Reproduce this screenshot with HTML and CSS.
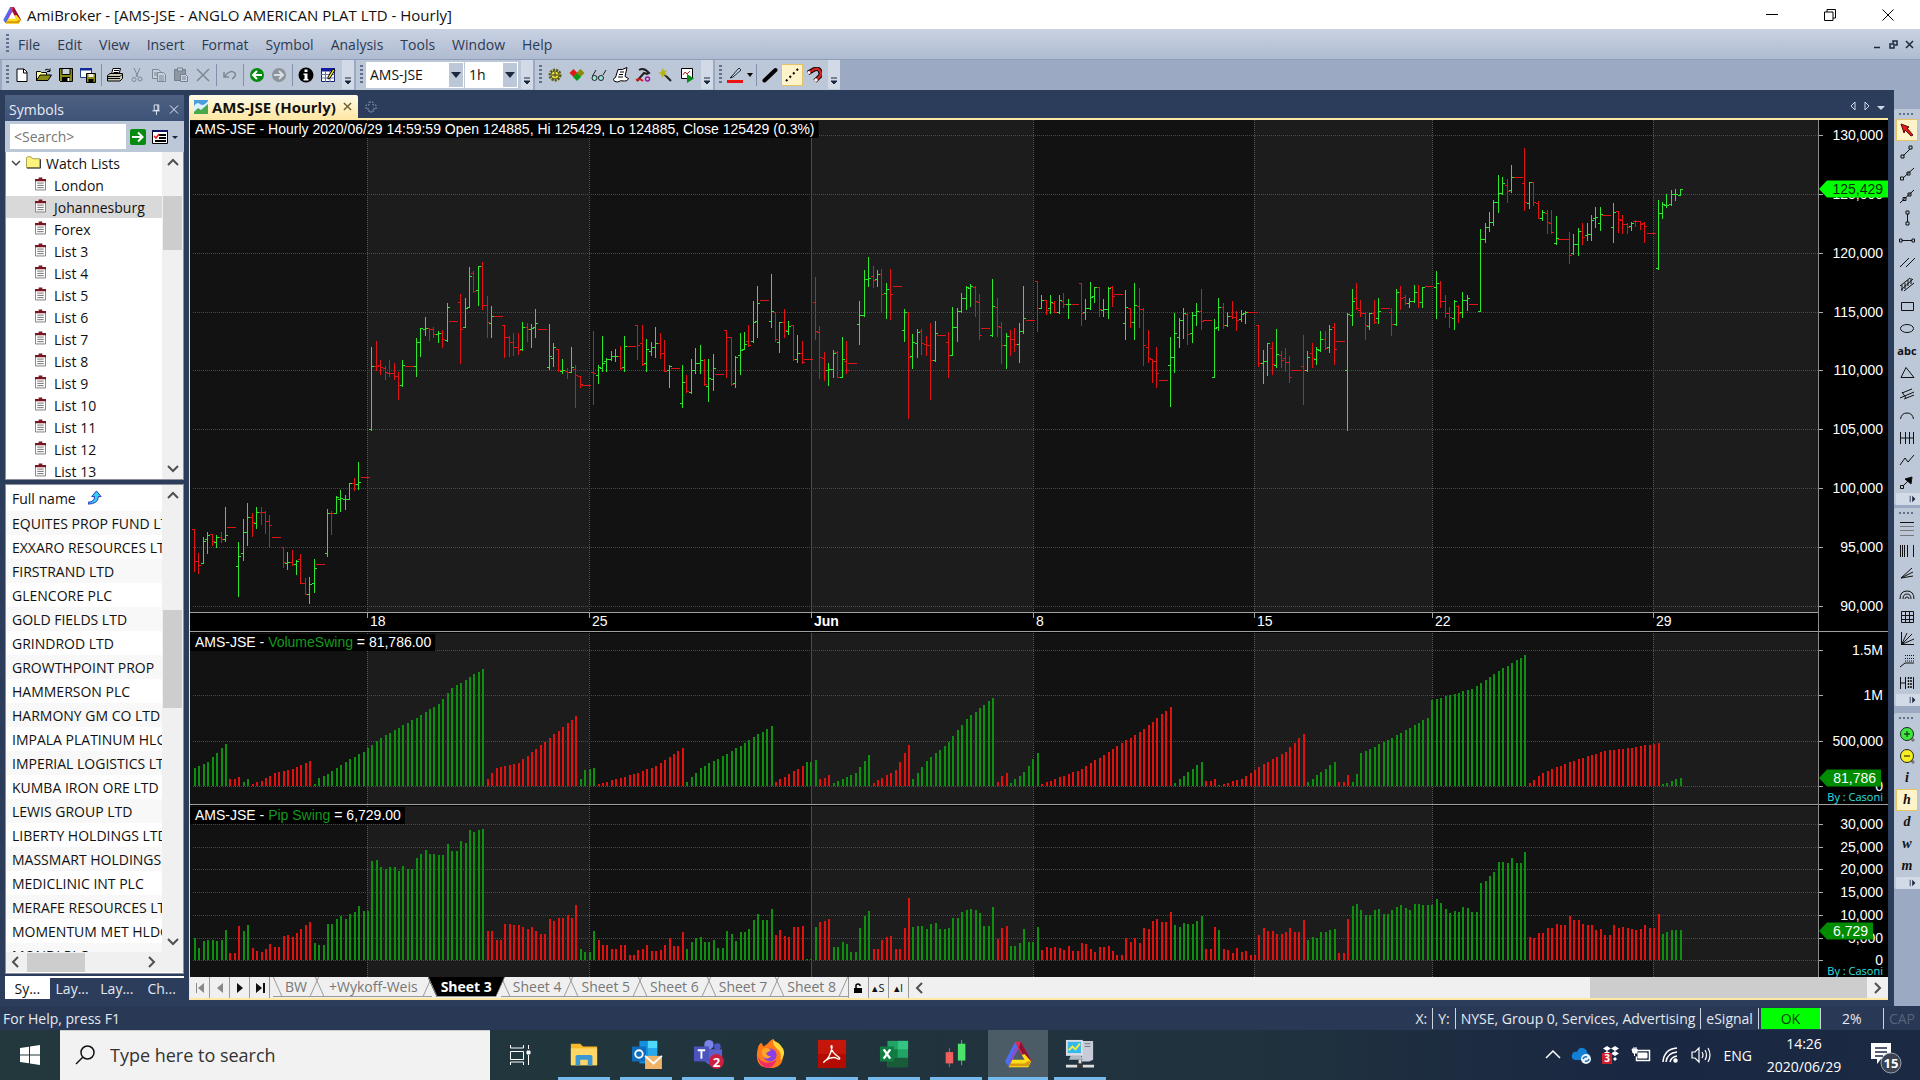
FILE: index.html
```
<!DOCTYPE html>
<html lang="en">
<head>
    <title>AmiBroker - [AMS-JSE - ANGLO AMERICAN PLAT LTD - Hourly]</title>
    <meta charset="UTF-8">
    <meta name="viewport" content="width=device-width, initial-scale=1.0">
    <link rel="stylesheet" href="styles.css">
</head>

<body>
    <svg class="defs" aria-hidden="true">
        <defs>
            <symbol id="ami" viewBox="0 0 32 32">
                <path d="M13 3 2 24l4 5 7-13 3-5 3-6z" fill="#4a6ff0" />
                <path d="M13 3h6l11 20-6 1-8-14z" fill="#e0284a" />
                <path d="M16 11 6 29l3-12 4-9z" fill="#8a4ed0" />
                <path d="m19 3 11 20-2 5-11-19z" fill="#8d1238" />
                <path d="M10 22h13l-3-5 3-1 7 8-3 6H6z" fill="#ffe018" />
                <path d="M6 29h21l3-6-4 1-3 2H8z" fill="#d89a10" />
            </symbol>
            <symbol id="more" viewBox="0 0 8 8"><path d="M1 1h6M1 4h6L4 7z" fill="#1b293e" stroke="#1b293e" stroke-width="1" /></symbol>
            <symbol id="moreside" viewBox="0 0 10 10"><path d="M1.5 1v8" stroke="#1b293e" /><path d="M4 1l4 4-4 4z" fill="#1b293e" /></symbol>
            <symbol id="clip" viewBox="0 0 12 14">
                <path d="M.5 2.5h11v11H.5z" fill="#fff" stroke="#777" /><path d="M0 1.500h12v2.500H0zM4 0h4v2H4z" fill="#7a1620" />
                <path d="M2.500 6h7M2.500 8.500h7M2.500 11h7" stroke="#666" />
            </symbol>
            <symbol id="up" viewBox="0 0 16 16"><path d="m3 10 5-5 5 5" fill="none" stroke="#505050" stroke-width="2" /></symbol>
            <symbol id="down" viewBox="0 0 16 16"><path d="m3 6 5 5 5-5" fill="none" stroke="#505050" stroke-width="2" /></symbol>
            <symbol id="left" viewBox="0 0 16 16"><path d="M10 3 5 8l5 5" fill="none" stroke="#505050" stroke-width="2" /></symbol>
            <symbol id="right" viewBox="0 0 16 16"><path d="m6 3 5 5-5 5" fill="none" stroke="#505050" stroke-width="2" /></symbol>
        </defs>
    </svg>

    <header class="titlebar">
        <svg class="logo"><use href="#ami" /></svg>
        <h1>AmiBroker - [AMS-JSE - ANGLO AMERICAN PLAT LTD - Hourly]</h1>
        <button class="winbtn" aria-label="Minimize"><svg viewBox="0 0 12 12"><path d="M0 5.500h12" /></svg></button>
        <button class="winbtn" aria-label="Restore"><svg viewBox="0 0 12 12"><path d="M.5 3h8.500v8.500H.5zM3 3V.5h8.500V9H9" /></svg></button>
        <button class="winbtn" aria-label="Close"><svg viewBox="0 0 12 12"><path d="m.5.5 11 11m0-11-11 11" /></svg></button>
    </header>

    <nav class="menubar">
        <span class="grip"></span>
        <button>File</button><button>Edit</button><button>View</button><button>Insert</button><button>Format</button><button>Symbol</button><button>Analysis</button><button>Tools</button><button>Window</button><button>Help</button>
        <span class="childbtns">
            <button aria-label="Minimize chart"><svg viewBox="0 0 9 9"><path d="M1 7.500h6" /></svg></button>
            <button aria-label="Restore chart"><svg viewBox="0 0 9 9"><path d="M1 4h4v4H1zM4 3V1h4v4H6" /></svg></button>
            <button aria-label="Close chart"><svg viewBox="0 0 9 9"><path d="m1 1 7 7m0-7L1 8" /></svg></button>
        </span>
    </nav>

    <div class="toolbars">
        <div class="toolbar">
            <span class="grip"></span>
            <button aria-label="New"><svg viewBox="0 0 16 16"><path d="M3 2h7l3 3v9.500H3z" fill="#fff" stroke="#000" /><path d="M9.500 2v4H13" fill="none" stroke="#000" /></svg></button>
            <button aria-label="Open"><svg viewBox="0 0 16 16"><path d="M.5 13.500V4.500h4l1 1h5v3" fill="#ffff9a" stroke="#000" /><path d="M.5 13.500 4 8h11.500L12 13.500z" fill="#8b8b12" stroke="#000" /><path d="M9 3q3-2 5 1m0-2.500V4.500h-3" fill="none" stroke="#000" /></svg></button>
            <button aria-label="Save"><svg viewBox="0 0 16 16"><path d="M1.500 1.500h13v13h-12l-1-1z" fill="#8b8b12" stroke="#000" /><path d="M4 1.500h8v6H4z" fill="#c9d2df" stroke="#000" /><path d="M4 10h8v4.500H4z" /><path d="M9.500 11h2v3h-2z" fill="#fff" /></svg></button>
            <button aria-label="Save all"><svg viewBox="0 0 16 16"><path d="M.5 1.500h11v9H.5z" fill="#fff" stroke="#223a90" /><path d="M0 1h12v2.500H0z" fill="#112a9a" /><path d="M6.500 6.500h9v9h-9z" fill="#8b8b12" stroke="#000" /><path d="M8.500 7h5v3h-5z" fill="#eee" /><path d="M8.500 12h5v3.500h-5z" /></svg></button>
            <span class="sep"></span>
            <button aria-label="Print"><svg viewBox="0 0 16 16"><path d="M4.500 7 6 1.500h7.500L12 7z" fill="#fff" stroke="#000" /><path d="M7 3.500h5M6.500 5.500h5" stroke="#000" /><path d="M.5 8.500 3 6.500h12.500v5L13 14H.5z" fill="#c9c9b0" stroke="#000" /><path d="M1 9.500h12m-12 2h12m0-2 2-2" stroke="#000" fill="none" /></svg></button>
            <button aria-label="Cut"><svg viewBox="0 0 16 16" fill="none" stroke="#7e8794"><path d="m5 1 4 9m2-9L7 10" /><circle cx="5" cy="12.500" r="2" /><circle cx="11" cy="12" r="2" /></svg></button>
            <button aria-label="Copy"><svg viewBox="0 0 16 16" fill="#c6cfdc" stroke="#7e8794"><path d="M1.500 2.500h6l2 2v7h-8z" /><path d="M6.500 5.500h6l2 2v7h-8z" /><path d="M8 9h5m-5 2h5m-5 2h5M3 6h3M3 8h3" /></svg></button>
            <button aria-label="Paste"><svg viewBox="0 0 16 16" fill="#8d96a3" stroke="#757e8b"><path d="M1.500 2.500h11v11h-11z" /><path d="M4.500 1h5v3h-5z" fill="#ccd" /><path d="M7.500 7.500h5l2 2v5h-7z" fill="#ccd4e0" /><path d="M9 10h4m-4 2h4" /></svg></button>
            <button aria-label="Delete"><svg viewBox="0 0 16 16"><path d="m2 2 12 12M14 2 2 14" stroke="#7e8794" stroke-width="1.500" /></svg></button>
            <span class="sep"></span>
            <button aria-label="Undo"><svg viewBox="0 0 16 16" fill="none" stroke="#7e8794" stroke-width="1.500"><path d="M2 5v5h5M2.500 9.500Q8 2 13 6q1.500 3-3 6" /></svg></button>
            <span class="sep"></span>
            <button aria-label="Back"><svg viewBox="0 0 16 16"><circle cx="8" cy="8" r="7" fill="#078a10" /><path d="M13 8H4m4-4L4 8l4 4" fill="none" stroke="#fff" stroke-width="2" /></svg></button>
            <button aria-label="Forward"><svg viewBox="0 0 16 16"><circle cx="8" cy="8" r="7" fill="#8d939b" /><path d="M3 8h9M8 4l4 4-4 4" fill="none" stroke="#d8dde6" stroke-width="2" /></svg></button>
            <span class="sep"></span>
            <button aria-label="Information"><svg viewBox="0 0 16 16"><circle cx="8" cy="8" r="7.500" /><path d="M6.500 2.500h3v2.500h-3zM5.500 6.500h4V12h1v1.500h-5V12h1V8h-1z" fill="#fff" /></svg></button>
            <button aria-label="Quote editor"><svg viewBox="0 0 16 16"><path d="M1.500 1.500h13v13h-13z" fill="#fff" stroke="#15206a" /><path d="M1 1h14v3.500H1z" fill="#101c9a" /><path d="M1.500 7.500h13m-13 3.500h13m-9-7v11m4.500-11v11" stroke="#6571a8" /><path d="m8 10 5-8 2 1-5 8-2 1z" fill="#f6e61a" stroke="#000" /></svg></button>
            <button class="more" aria-label="Toolbar options"><svg><use href="#more" /></svg></button>
        </div>
        <div class="toolbar">
            <span class="grip"></span>
            <label class="combo symbolbox"><select aria-label="Symbol"><option>AMS-JSE</option></select><svg viewBox="0 0 14 24"><path d="M2 9h10l-5 6z" /></svg></label>
            <label class="combo intervalbox"><select aria-label="Interval"><option>1h</option></select><svg viewBox="0 0 14 24"><path d="M2 9h10l-5 6z" /></svg></label>
            <button class="more" aria-label="Toolbar options"><svg><use href="#more" /></svg></button>
        </div>
        <div class="toolbar">
            <span class="grip"></span>
            <button aria-label="Parameters"><svg viewBox="0 0 16 16"><circle cx="8" cy="8" r="5" fill="none" stroke="#5c5b12" stroke-width="3" stroke-dasharray="2 1" /><circle cx="8" cy="8" r="4" fill="#e6e23a" stroke="#5c5b12" /><path d="M8 5v5M5 8h6" stroke="#333" /></svg></button>
            <button aria-label="Colors"><svg viewBox="0 0 16 16"><path d="m4.500 2 4 4-4 4-4-4z" fill="#e01818" /><path d="m11.500 2 4 4-4 4-4-4z" fill="#8a8a10" /><path d="m8 6 4 4-4 4-4-4z" fill="#0a9a18" /></svg></button>
            <button aria-label="Explore"><svg viewBox="0 0 16 16" fill="#9fe4e0" stroke="#222"><circle cx="3.500" cy="11" r="2.500" /><circle cx="10" cy="11" r="2.500" /><path d="M1.500 9 5 3m2 7h1m4-2 3-5" fill="none" /></svg></button>
            <button aria-label="Report"><svg viewBox="0 0 16 16"><path d="M5 2.500q4 1 9-2l-2 9 3.500 2q-1 3-4 2.500-4-1-7 1-4 0-4-2.500 0-1.500 2-2z" fill="#fff" stroke="#000" /><path d="M7 5h4M6 7.500h4m-5 2.500h5" stroke="#000" /></svg></button>
            <button aria-label="Optimize"><svg viewBox="0 0 16 16"><path d="M4 3q5-3 10 3l-2 1-3-1-7 8" fill="none" stroke="#222" stroke-width="2" /><path d="m1 13 4-1 3 2" stroke="#d01c1c" fill="none" stroke-width="2" /><circle cx="12.500" cy="12" r="2" fill="none" stroke="#a016a0" stroke-width="1.500" /></svg></button>
            <button aria-label="Wizard"><svg viewBox="0 0 16 16"><path d="m6 6 8 8" stroke="#222" stroke-width="2" /><path d="m6 1 1 3 3-1-2 3 2 3-3-1-2 3-1-4-3-1 3-1z" fill="#b9b412" /></svg></button>
            <button aria-label="Run"><svg viewBox="0 0 16 16"><path d="M2.500 1.500h11v10h-11z" fill="#fff" stroke="#000" /><path d="m4 8 2-3 2 2 3-3" stroke="#d01c1c" fill="none" /><path d="m8 7 7 4.500-7 4.500z" fill="#0a8c18" /></svg></button>
            <button class="more" aria-label="Toolbar options"><svg><use href="#more" /></svg></button>
        </div>
        <div class="toolbar">
            <span class="grip"></span>
            <button aria-label="Line color"><svg viewBox="0 0 16 16"><path d="m5 9 7-8 2 2-8 7-3 1z" fill="#b9e3f4" stroke="#222" /><path d="M0 13h16v3H0z" fill="#ee1111" /></svg></button>
            <button class="tiny" aria-label="Choose color"><svg viewBox="0 0 8 8"><path d="M1 2h6L4 6z" /></svg></button>
            <span class="sep"></span>
            <button aria-label="Thick line"><svg viewBox="0 0 16 16"><path d="M2.500 13.500 13.500 3" stroke="#000" stroke-width="4" stroke-linecap="round" /></svg></button>
            <button class="on" aria-label="Dotted line"><svg viewBox="0 0 16 16"><path d="M2 14 14 2" stroke="#000" stroke-width="2" stroke-dasharray="2 3" /></svg></button>
            <button aria-label="Snap to price"><svg viewBox="0 0 16 16" fill="none"><path d="m2 6 5-3q5-3 7 1t-1 6l-4 4" stroke="#000" stroke-width="4.500" /><path d="m2 6 5-3q5-3 7 1t-1 6l-4 4" stroke="#d42222" stroke-width="2.500" /><path d="m2 6 2-1m7 7-2 2" stroke="#fff" stroke-width="3" /></svg></button>
            <button class="more" aria-label="Toolbar options"><svg><use href="#more" /></svg></button>
        </div>
    </div>

    <main class="workspace">
        <aside class="symbols">
            <header><h2>Symbols</h2>
                <button aria-label="Pin"><svg viewBox="0 0 10 12"><path d="M3 1h5v6H3zM1 7.500h8M5.500 7.500V12M7 1v6" /></svg></button>
                <button aria-label="Close panel"><svg viewBox="0 0 10 10"><path d="m1 1 8 8m0-8L1 9" /></svg></button>
            </header>
            <div class="searchrow">
                <input type="text" placeholder="&lt;Search&gt;" aria-label="Search symbols">
                <button aria-label="Go"><svg viewBox="0 0 16 16"><rect width="16" height="16" rx="2" fill="#078a10" /><path d="M2 8h10M8 3.500 12.500 8 8 12.500" fill="none" stroke="#fff" stroke-width="2" /></svg></button>
                <button class="columns" aria-label="Columns"><svg viewBox="0 0 26 16"><path d="M.5 1.500h15v13H.5z" fill="#fff" stroke="#000" /><path d="M0 1h16v2H0z" fill="#101060" /><path d="M7 6h7M7 9h7M3 12h11" stroke="#000" stroke-width="2" /><path d="m2 7 2 2 3-4" stroke="#e01818" fill="none" stroke-width="1.500" /><path d="M20 7h6l-3 3z" fill="#1b293e" /></svg></button>
            </div>
            <div class="pane treepane">
                <ul class="tree">
                    <li class="root"><svg class="caret" viewBox="0 0 10 10"><path d="m1 3 4 4 4-4" /></svg><svg class="folder" viewBox="0 0 16 14"><path d="M.5 13V2.500l1-1h4l1.500 2h7.500V13z" fill="#fdf37c" stroke="#a89a4a" /><path d="M15.500 4v9.500H1" fill="none" stroke="#222" /></svg>Watch Lists</li>
                    <li><svg><use href="#clip" /></svg>London</li>
                    <li class="picked"><svg><use href="#clip" /></svg>Johannesburg</li>
                    <li><svg><use href="#clip" /></svg>Forex</li>
                    <li><svg><use href="#clip" /></svg>List 3</li>
                    <li><svg><use href="#clip" /></svg>List 4</li>
                    <li><svg><use href="#clip" /></svg>List 5</li>
                    <li><svg><use href="#clip" /></svg>List 6</li>
                    <li><svg><use href="#clip" /></svg>List 7</li>
                    <li><svg><use href="#clip" /></svg>List 8</li>
                    <li><svg><use href="#clip" /></svg>List 9</li>
                    <li><svg><use href="#clip" /></svg>List 10</li>
                    <li><svg><use href="#clip" /></svg>List 11</li>
                    <li><svg><use href="#clip" /></svg>List 12</li>
                    <li><svg><use href="#clip" /></svg>List 13</li>
                </ul>
                <div class="vscroll"><svg><use href="#up" /></svg><i class="thumb treethumb"></i><svg><use href="#down" /></svg></div>
            </div>
            <div class="pane listpane">
                <div class="names">
                    <table>
                        <thead><tr><th>Full name <svg viewBox="0 0 16 16"><path d="M0 13q7 0 7-6H4l5-6 5 6h-3q0 8-11 8z" fill="#35d0f0" stroke="#1d2fc0" /></svg></th></tr></thead>
                        <tbody>
                            <tr><td>EQUITES PROP FUND LTD</td></tr>
                            <tr><td>EXXARO RESOURCES LTD</td></tr>
                            <tr><td>FIRSTRAND LTD</td></tr>
                            <tr><td>GLENCORE PLC</td></tr>
                            <tr><td>GOLD FIELDS LTD</td></tr>
                            <tr><td>GRINDROD LTD</td></tr>
                            <tr><td>GROWTHPOINT PROP</td></tr>
                            <tr><td>HAMMERSON PLC</td></tr>
                            <tr><td>HARMONY GM CO LTD</td></tr>
                            <tr><td>IMPALA PLATINUM HLGS</td></tr>
                            <tr><td>IMPERIAL LOGISTICS LTD</td></tr>
                            <tr><td>KUMBA IRON ORE LTD</td></tr>
                            <tr><td>LEWIS GROUP LTD</td></tr>
                            <tr><td>LIBERTY HOLDINGS LTD</td></tr>
                            <tr><td>MASSMART HOLDINGS</td></tr>
                            <tr><td>MEDICLINIC INT PLC</td></tr>
                            <tr><td>MERAFE RESOURCES LTD</td></tr>
                            <tr><td>MOMENTUM MET HLDGS</td></tr>
                            <tr><td>MONDI PLC</td></tr>
                        </tbody>
                    </table>
                </div>
                <div class="vscroll"><svg><use href="#up" /></svg><i class="thumb listthumb"></i><svg><use href="#down" /></svg></div>
                <div class="hscroll"><svg><use href="#left" /></svg><i class="thumb"></i><svg><use href="#right" /></svg></div>
            </div>
            <div class="paneltabs"><button class="on">Sy...</button><button>Lay...</button><button>Lay...</button><button>Ch...</button></div>
        </aside>

        <section class="document">
            <div class="doctabs">
                <div class="doctab">
                    <svg class="docicon" viewBox="0 0 14 14"><rect width="14" height="14" fill="#4a9de0" /><path d="M0 6q3-5 6-2t8-3v13H0z" fill="#d8f0ff" /><path d="m0 12 4-4 3 2 7-6v10H0z" fill="#49a84c" /></svg>
                    <button class="doctitle">AMS-JSE (Hourly)</button>
                    <button class="x" aria-label="Close tab"><svg viewBox="0 0 10 10"><path d="m1 1 8 8m0-8L1 9" stroke="#6b5a2c" stroke-width="1.500" /></svg></button>
                </div>
                <button class="newtab" aria-label="New tab"><svg viewBox="0 0 12 12"><path d="M4 1h4v3h3v4H8v3H4V8H1V4h3z" fill="none" stroke="#8193b3" stroke-dasharray="2 1" /></svg></button>
                <span class="tabnav">
                    <button aria-label="Previous tab"><svg viewBox="0 0 10 10"><path d="M7 1v8L3 5z" fill="none" stroke="#ced8ea" /></svg></button>
                    <button aria-label="Next tab"><svg viewBox="0 0 10 10"><path d="M3 1v8l4-4z" fill="none" stroke="#ced8ea" /></svg></button>
                    <button aria-label="Tab list"><svg viewBox="0 0 10 10"><path d="M1 5h8L5 9z" fill="#ced8ea" /></svg></button>
                </span>
            </div>
            <div class="chartframe">
                <svg id="chart" viewBox="0 0 1698 857" role="img" aria-label="AMS-JSE hourly price, VolumeSwing and Pip Swing"></svg>
                <div class="sheets">
                    <div class="sheetnav">
                        <button class="dim" aria-label="First sheet"><svg viewBox="0 0 12 12"><path d="M2.500 1v10" stroke="currentColor" /><path d="M10 1v10L4 6z" fill="currentColor" /></svg></button>
                        <button class="dim" aria-label="Previous sheet"><svg viewBox="0 0 12 12"><path d="M9 1v10L3 6z" fill="currentColor" /></svg></button>
                        <button aria-label="Next sheet"><svg viewBox="0 0 12 12"><path d="M3 1v10l6-5z" fill="currentColor" /></svg></button>
                        <button aria-label="Last sheet"><svg viewBox="0 0 12 12"><path d="M2 1v10l6-5z" fill="currentColor" /><path d="M10 1v10" stroke="currentColor" stroke-width="2" /></svg></button>
                    </div>
                    <button class="sheet">BW</button><button class="sheet wide">+Wykoff-Weis</button><button class="sheet on">Sheet 3</button><button class="sheet">Sheet 4</button><button class="sheet">Sheet 5</button><button class="sheet">Sheet 6</button><button class="sheet">Sheet 7</button><button class="sheet">Sheet 8</button>
                    <div class="sheetnav locks">
                        <button aria-label="Lock"><svg viewBox="0 0 12 12"><path d="M2 6h8v5H2z" /><path d="M4 6V3q2-2 4 0v1" fill="none" stroke="#000" stroke-width="1.500" /></svg></button>
                        <button>▴S</button>
                        <button>▴I</button>
                    </div>
                    <div class="hscroll"><svg><use href="#left" /></svg><i class="thumb"></i><svg><use href="#right" /></svg></div>
                </div>
            </div>
        </section>

        <div class="dock">
            <div class="vtoolbar">
                <span class="hgrip"></span>
                <button class="on" aria-label="Select"><svg viewBox="0 0 16 16"><path d="m2 2 8 3-2 1 6 7-2 1-6-6-1 3z" fill="#e81818" stroke="#501010" /></svg></button>
                <button aria-label="Trend line"><svg viewBox="0 0 16 16"><path d="M4 12 11 5M2 11h3v3H2zM10 2h3v3h-3z" /></svg></button>
                <button aria-label="Ray"><svg viewBox="0 0 16 16"><path d="M4 12 15 2M1.500 11h3v3h-3zM8 6h3v3H8z" /></svg></button>
                <button aria-label="Extended"><svg viewBox="0 0 16 16"><path d="M1 15 15 2M4 9.500h3v3H4zM9 5h3v3H9z" /></svg></button>
                <button aria-label="Vertical"><svg viewBox="0 0 16 16"><path d="M8.500 4v8M7 1h3v3H7zM7 12h3v3H7z" /></svg></button>
                <button aria-label="Horizontal"><svg viewBox="0 0 16 16"><path d="M3 8.500h10M.5 7h2.500v3H.5zM13 7h2.500v3H13z" /></svg></button>
                <button aria-label="Parallel"><svg viewBox="0 0 16 16"><path d="m1 13 9-9M7 13l9-9" /></svg></button>
                <button aria-label="Channel"><svg viewBox="0 0 16 16"><path d="m1 10 10-8M5 15l10-8M3 9v6m3-8v6m3-9v6m3-8v6M2 14 14 3" /></svg></button>
                <button aria-label="Rectangle"><svg viewBox="0 0 16 16"><path d="M2.500 4.500h12v8h-12z" /></svg></button>
                <button aria-label="Ellipse"><svg viewBox="0 0 16 16"><ellipse cx="8" cy="8.500" rx="6.500" ry="4" /></svg></button>
                <button class="abc">abc</button>
                <button aria-label="Triangle"><svg viewBox="0 0 16 16"><path d="M2 13.500h13L7 3.500z" /></svg></button>
                <button aria-label="Pitchfork"><svg viewBox="0 0 16 16"><path d="m1 12 14-6M3 7l10-4M5 13l10-4M3 6l4 6" /></svg></button>
                <button aria-label="Arc"><svg viewBox="0 0 16 16"><path d="M1.500 11q1-6 6.500-6t6.500 6" /></svg></button>
                <button aria-label="Cycles"><svg viewBox="0 0 16 16"><path d="M1.500 2v12m5-12v12m4-12v12m4-12v12M2 8h12" /></svg></button>
                <button aria-label="Zig zag"><svg viewBox="0 0 16 16"><path d="m1 13 5-7 3 4 6-7" /></svg></button>
                <button aria-label="Arrow"><svg viewBox="0 0 16 16"><path d="m4 12 6-6M1.500 11.500h3v3h-3z" /><path d="m13 3-1 7-6-5z" fill="#000" /></svg></button>
                <button class="sidemore" aria-label="Toolbar options"><svg><use href="#moreside" /></svg></button>
            </div>
            <div class="vtoolbar retrace">
                <span class="hgrip"></span>
                <button aria-label="Fibonacci retracement"><svg viewBox="0 0 16 16"><path d="M1 1.500h14" /><path d="M1 5.500h14M1 9.500h14M1 14.500h14" stroke="#777" /></svg></button>
                <button aria-label="Time zones"><svg viewBox="0 0 16 16"><path d="M1.500 2v12m2-12v12m2-12v12m3-12v12m6-12v12" /></svg></button>
                <button aria-label="Fan"><svg viewBox="0 0 16 16"><path d="M2 13 13 3M2 13l12-6M2 13l12-2" /></svg></button>
                <button aria-label="Arcs"><svg viewBox="0 0 16 16"><path d="M1 12q0-8 7-8t7 8M4 12q0-5 4-5t4 5M6 12q0-2 2-2t2 2" /></svg></button>
                <button aria-label="Gann square"><svg viewBox="0 0 16 16"><path d="M2.500 2.500h12v11h-12zM6.500 2v12m4-12v12M2 6.500h12m-12 4h12" /></svg></button>
                <button aria-label="Gann fan"><svg viewBox="0 0 16 16"><path d="M2.500 1v12.500H15M2.500 13.500 13 3M2.500 13.500 8 2m-5.500 11.500L15 8" /></svg></button>
                <button aria-label="Extension"><svg viewBox="0 0 16 16"><path d="m1 14 5-4h9" /><path d="M6 2.500h9M6 5.500h9M6 8h9" stroke-dasharray="1 1" /></svg></button>
                <button aria-label="Time extension"><svg viewBox="0 0 16 16"><path d="M1.500 2v12m5-12v12M2 8h5M14.500 2v12" /><path d="M9.500 2v12m2.500-12v12" stroke-width="1.500" stroke-dasharray="2 1" /></svg></button>
                <button class="sidemore" aria-label="Toolbar options"><svg><use href="#moreside" /></svg></button>
            </div>
            <div class="vtoolbar intervals">
                <span class="hgrip"></span>
                <button aria-label="Zoom in"><svg viewBox="0 0 16 16"><path d="m12 12 3 3" stroke-width="3" stroke="#777" /><circle cx="8" cy="8" r="6.500" fill="#3be83b" stroke="#222" /><path d="M5 8h6M8 5v6" /></svg></button>
                <button aria-label="Zoom out"><svg viewBox="0 0 16 16"><path d="m12 12 3 3" stroke-width="3" stroke="#777" /><circle cx="8" cy="8" r="6.500" fill="#f6ee20" stroke="#222" /><path d="M5 8h6" /></svg></button>
                <button>i</button>
                <button class="on">h</button>
                <button>d</button>
                <button>w</button>
                <button>m</button>
                <button class="sidemore" aria-label="Toolbar options"><svg><use href="#moreside" /></svg></button>
            </div>
        </div>
    </main>

    <footer class="statusbar">
        <span class="help">For Help, press F1</span>
        <span>X:</span><span>Y:</span><span>NYSE, Group 0, Services, Advertising</span><span>eSignal</span><span class="ok">OK</span><span class="pct">2%</span><span class="caps">CAP</span>
    </footer>

    <div class="taskbar">
        <button class="start" aria-label="Start"><svg viewBox="0 0 20 20"><path d="m0 3 9-1.300V9.500H0zM10 1.500 20 0v9.500H10zM0 10.500h9v7.800L0 17zM10 10.500h10V20l-10-1.500z" fill="#fff" /></svg></button>
        <label class="tasksearch"><svg viewBox="0 0 20 20"><circle cx="12.500" cy="7.500" r="6.500" /><path d="m8 12-7 7" /></svg><input type="text" placeholder="Type here to search"></label>
        <button class="taskview" aria-label="Task view"><svg viewBox="0 0 22 22" fill="none" stroke="#fff"><path d="M1.500 1v3h13V1M1.500 7.500h13v8h-13zM1.500 21v-3h13v3M19.500 1v4m0 6v10" /><path d="M18 7h3v3h-3z" fill="#fff" /></svg></button>
        <button class="app" aria-label="File Explorer"><svg viewBox="0 0 32 32"><path d="M2 5h10l3 3h15v20H2z" fill="#f7b928" /><path d="M2 10h28v18H2z" fill="#ffd766" /><path d="M7 28v-9q0-2 2-2h14q2 0 2 2v9h-5v-6h-8v6z" fill="#3b97d3" /></svg></button>
        <button class="app" aria-label="Outlook"><svg viewBox="0 0 32 32"><path d="M9 2h19v24H9z" fill="#1490df" /><path d="M18 2h10v8H18z" fill="#50d9ff" /><path d="M18 10h10v8H18z" fill="#28a8ea" /><path d="M1 8h15v16H1z" fill="#0f6cbd" /><circle cx="8.500" cy="16" r="4" fill="none" stroke="#fff" stroke-width="2" /><path d="M15 18h18v14H15z" fill="#f0b36a" /><path d="m15 18 9 8 9-8" fill="none" stroke="#fff" stroke-width="2" /></svg></button>
        <button class="app" aria-label="Teams"><svg viewBox="0 0 32 32"><circle cx="17" cy="6" r="5" fill="#7b83eb" /><circle cx="26" cy="8" r="3.500" fill="#5059c9" /><path d="M11 11h20v9q-3 8-10 8T11 20z" fill="#5b62c9" /><path d="M1 8h16v16H1z" fill="#4b53bc" /><path d="M5 12h8M9 12v9" stroke="#fff" stroke-width="2" /><circle cx="25" cy="24" r="8" fill="#cc1f3f" /><text x="25" y="30" class="badge">2</text></svg></button>
        <button class="app" aria-label="Firefox"><svg viewBox="0 0 32 32"><path d="M3 10q1-5 4-6l2 4q4-2 7-6 2-2 4-2 1 4 5 6 5 4 5 11 0 14-14 14T2 18q0-5 1-8z" fill="#ff7a1a" /><path d="M19 1q0 6 5 10t3 12q4-4 4-9-1-8-12-13z" fill="#ffd93a" /><circle cx="16" cy="17" r="7" fill="#8a3ee8" /><path d="M3 18q2 6 8 7t12-3q-3 8-9 9-9-1-11-13z" fill="#ee2d68" /><path d="M8 11q5-3 9 1l-5 3q1 4 5 3-4 5-8 1-3-4-1-8z" fill="#ffa52a" /></svg></button>
        <button class="app" aria-label="Acrobat Reader"><svg viewBox="0 0 32 32"><path d="M1 1h30v30H1z" fill="#b30b00" /><path d="M1 1h30v15H1z" fill="#c5160c" /><path d="M8 24q6-4 8-15 0-3-1-1 0 6 9 12 1 3-4 0-6-1-11 3-3 3-1 1z" fill="none" stroke="#fff" stroke-width="1.500" /></svg></button>
        <button class="app" aria-label="Excel"><svg viewBox="0 0 32 32"><path d="M9 2h22v28H9z" fill="#21a366" /><path d="M20 2h11v9H20z" fill="#33c481" /><path d="M9 11h11v9H9z" fill="#107c41" /><path d="M9 20h22v10H9z" fill="#185c37" /><path d="M1 8h15v16H1z" fill="#107c41" /><path d="m5 11 7 10m0-10L5 21" stroke="#fff" stroke-width="2.500" /></svg></button>
        <button class="app" aria-label="Charts"><svg viewBox="0 0 32 32"><path d="M9 10v20" stroke="#e25555" /><path d="M5 14h8v12H5z" fill="#ee5f5f" /><path d="M22 1v27" stroke="#2ad052" /><path d="M18 5h8v18h-8z" fill="#4be36a" /></svg></button>
        <button class="app active" aria-label="AmiBroker"><svg><use href="#ami" /></svg></button>
        <button class="app" aria-label="Data feed"><svg viewBox="0 0 32 32"><path d="M18 2h12v20l-4 2h-8z" fill="#c8ccd8" /><path d="M21 5h6m-6 3h6" stroke="#777" /><path d="M1 1h18v17H1z" fill="#d9dce6" /><path d="M3 3h14v12H3z" fill="#38b8e8" /><path d="m4 12 4-4 3 3 5-6" stroke="#f6ee40" stroke-width="2" fill="none" /><path d="m6 18-2 4h16l-3-4z" fill="#b3b8c6" /><path d="M16 22v5M1 29h30" stroke="#ddd" stroke-width="3" /><path d="M13 26h6v5h-6z" fill="#333" /></svg></button>

        <div class="tray">
            <svg class="chev" viewBox="0 0 16 16"><path d="m1 11 7-7 7 7" fill="none" stroke="#fff" stroke-width="1.500" /></svg>
            <svg viewBox="0 0 20 20"><path d="M4 15q-4-1-3-5t5-3q2-5 6-4t4 5q4 1 3 7z" fill="#1380d8" /><circle cx="15" cy="14" r="5" fill="#e8f2fb" /><path d="M12 14q1-3 4-2m2 2q-1 3-4 2" stroke="#1b6bb5" fill="none" stroke-width="1.500" /></svg>
            <svg viewBox="0 0 20 20"><path d="m6 1 4 2.500L6 6 2 3.500zM14 1l4 2.500L14 6l-4-2.500zM6 6l4 2.500L6 11 2 8.500zM14 6l4 2.500-4 2.500-4-2.500zM14 12l2 2-2 2-2-2z" fill="#fff" /><path d="M1 8h10v11H1z" fill="#cc1f2f" /><text x="6" y="17" class="minibadge">3</text></svg>
            <svg viewBox="0 0 20 20" fill="none" stroke="#fff"><path d="M4.500 5.500h14v10h-13v-4" stroke-width="1.500" /><path d="M7 8h9v5H7zM1 4h5v4H2zM3 2v2m2-2v2M3.500 8v3" fill="#fff" /></svg>
            <svg viewBox="0 0 20 20" fill="none" stroke="#fff" stroke-width="1.500"><path d="M2 17Q3 4 16 3M5 17q1-9 11-10M9 17q1-5 7-6" /><circle cx="14.500" cy="15.500" r="1.500" fill="#fff" /></svg>
            <svg viewBox="0 0 20 20" fill="none" stroke="#fff" stroke-width="1.200"><path d="M1 7h3l4-4v14l-4-4H1zM11 7q2 3 0 6M14 5q3 5 0 10M17 3q4 7 0 14" /></svg>
            <span class="lang">ENG</span>
            <time class="clock">14:26<br>2020/06/29</time>
            <button class="notify" aria-label="Notifications"><svg viewBox="0 0 32 32"><path d="M1 1h20v16H11l-4 5v-5H1z" fill="#fff" /><path d="M5 6h12M5 10h12M5 14h8" stroke="#1c2a40" stroke-width="1.500" /><circle cx="21" cy="21" r="10" fill="#3c4350" stroke="#9aa1ad" /><text x="21" y="26" class="count">15</text></svg></button>
        </div>
    </div>

    <script src="chart.js"></script>
</body>
</html>
```

FILE: styles.css
```
* { box-sizing: border-box; }
html, body { margin: 0; padding: 0; height: 100%; }
body { display: flex; flex-direction: column; min-height: 100vh; overflow: hidden; font-family: "Open Sans", "Noto Sans", sans-serif; font-size: 14px; color: #111; background: #2c3d5c; }
button { margin: 0; padding: 0; border: 0; background: none; font: inherit; color: inherit; display: flex; align-items: center; justify-content: center; }
h1, h2 { margin: 0; font-size: inherit; font-weight: 400; }
.defs { position: absolute; width: 0; height: 0; }

/* title + menu */
.titlebar { display: flex; align-items: center; height: 29px; background: #fff; flex: none; padding-right: 3px; }
.titlebar h1 { flex: 1; padding-left: 5px; white-space: nowrap; font-size: 15px; }
.logo { width: 20px; height: 20px; margin-left: 2px; }
.winbtn { width: 58px; height: 29px; }
.winbtn svg { width: 12px; height: 12px; fill: none; stroke: #000; }
.menubar { display: flex; align-items: center; gap: 1px; height: 31px; flex: none; background: linear-gradient(#c9d2e2, #afbbd1); color: #2c3a52; padding-left: 6px; border-bottom: 1px solid #8d9cb8; }
.menubar > button { padding: 0 8px; height: 28px; }
.childbtns { margin-left: auto; display: flex; gap: 7px; padding-right: 6px; }
.childbtns svg { width: 9px; height: 9px; fill: none; stroke: #1b293e; stroke-width: 1.5; }
.grip { width: 3px; height: 20px; background: repeating-linear-gradient(#61708c 0 2px, transparent 2px 4px); flex: none; }

/* toolbars */
.toolbars { display: flex; gap: 2px; height: 30px; flex: none; padding-left: 2px; background: #9ba9c2; }
.toolbar { display: flex; align-items: center; background: #bcc7d8; padding-left: 4px; padding-bottom: 1px; }
.toolbar > .grip { margin-right: 2px; }
.toolbar > button { width: 22px; height: 22px; }
.toolbar svg { width: 16px; height: 16px; }
.toolbar > button.on { background: #fff3ca; border: 1px solid #e5c365; }
.toolbar > button.tiny { width: 8px; }
.toolbar > button.tiny svg { width: 8px; height: 8px; }
.sep { width: 1px; height: 22px; margin: 0 2px; background: #8290ab; }
.toolbar > button.more { align-self: stretch; height: auto; width: 12px; margin-left: 3px; align-items: flex-end; padding-bottom: 4px; background: #d2dae7; }
.toolbar > button.more svg { width: 8px; height: 8px; }
.combo { display: flex; height: 26px; border: 1px solid #fff; background: #fff; margin-left: 1px; }
.combo select { appearance: none; border: 0; background: #fff; font: inherit; color: #111; flex: 1; min-width: 0; padding: 0 3px; }
.combo svg { width: 14px; height: 24px; background: #bcc7d8; fill: #1b293e; }
.symbolbox { width: 98px; }
.intervalbox { width: 53px; }

/* workspace */
.workspace { flex: 1; min-height: 0; display: flex; padding-left: 5px; }
.symbols { width: 179px; padding-top: 5px; display: flex; flex-direction: column; flex: none; margin-right: 5px; }
.symbols > header { display: flex; align-items: center; height: 26px; padding: 3px 5px 0 4px; gap: 8px; color: #e8edf6; background: linear-gradient(#4d6082, #3e5378); flex: none; }
.symbols h2 { flex: 1; }
.symbols > header svg { width: 10px; height: 11px; fill: none; stroke: #e8edf6; }
.searchrow { display: flex; align-items: center; gap: 4px; height: 31px; flex: none; padding: 0 3px 0 5px; background: #bcc7d8; }
.searchrow input { width: 116px; height: 25px; border: 0; padding: 0 4px; font: inherit; background: #fff; }
.searchrow input::placeholder { color: #767676; opacity: 1; }
.searchrow svg { width: 16px; height: 16px; }
.searchrow .columns { margin-left: 2px; }
.searchrow .columns svg { width: 26px; }
.pane { display: grid; grid-template-columns: minmax(0, 1fr) 21px; background: #fff; border: 1px solid #8a8f99; min-height: 0; overflow: hidden; }
.treepane { height: 328px; flex: none; margin-bottom: 4px; border-top: 0; }
.listpane { flex: 1; grid-template-rows: minmax(0, 1fr) 20px; padding-bottom: 1px; }
.tree { list-style: none; margin: 0; padding: 0; overflow: hidden; }
.tree li { display: flex; align-items: center; height: 22px; padding-left: 29px; gap: 8px; }
.tree li svg { width: 11px; height: 14px; flex: none; margin-bottom: 2px; }
.tree li.root { padding-left: 5px; gap: 5px; }
.tree .root .caret { width: 10px; fill: none; stroke: #444; stroke-width: 1.5; margin: 0; }
.tree .root .folder { width: 15px; }
.tree .picked { background: #d9d9d9; }
.vscroll { display: flex; flex-direction: column; align-items: center; background: #f0f0f0; padding: 3px 0; }
.vscroll svg:last-child { margin-top: auto; }
.vscroll svg, .hscroll svg { width: 16px; height: 16px; flex: none; }
.thumb { display: block; background: #cdcdcd; }
.treethumb { width: 19px; height: 54px; margin-top: 25px; }
.listthumb { width: 19px; height: 98px; margin-top: 106px; }
.hscroll { display: flex; align-items: center; background: #f0f0f0; }
.hscroll svg:last-child { margin-left: auto; }
.listpane .hscroll { grid-column: 1 / 3; padding: 0 24px 0 2px; }
.listpane .hscroll .thumb { width: 58px; height: 19px; margin-left: 3px; }
.names { overflow: hidden; }
.names table { border-collapse: collapse; table-layout: fixed; width: 100%; }
.names th, .names td { height: 24px; padding: 0 0 0 6px; text-align: left; font-weight: 400; white-space: nowrap; overflow: hidden; }
.names th { height: 26px; }
.names th svg { width: 15px; height: 15px; margin-left: 9px; vertical-align: -1px; }
.names tr:nth-child(odd) td { background: #f8f8f8; }
.paneltabs { display: grid; grid-template-columns: repeat(4, 1fr); height: 30px; padding-bottom: 7px; color: #e4e9f2; border-top: 2px solid #fff; flex: none; margin-top: 2px; }
.paneltabs .on { background: #fff; color: #111; }

/* chart document */
.document { flex: 1; min-width: 0; display: flex; flex-direction: column; padding: 5px 0 6px; }
.doctabs { display: flex; align-items: stretch; height: 23px; flex: none; }
.doctab { display: flex; align-items: center; gap: 4px; padding: 0 6px 0 5px; background: linear-gradient(#fffbe9, #ffe8a6); border-radius: 2px 2px 0 0; }
.doctitle { font-weight: 700; font-size: 15px; color: #111; }
.docicon { width: 14px; height: 14px; }
.x svg { width: 9px; height: 9px; }
.x { margin-left: 3px; }
.newtab { padding-left: 7px; }
.newtab svg { width: 12px; height: 12px; }
.tabnav { margin-left: auto; display: flex; gap: 4px; padding-right: 2px; }
.tabnav button { padding-bottom: 2px; }
.tabnav svg { width: 10px; height: 10px; }
.chartframe { flex: 1; min-height: 0; display: flex; flex-direction: column; background: #000; border: solid #ffe8a6; border-width: 2px 0 2px 1px; }
#chart { display: block; width: 100%; flex: 1; min-height: 0; background: #000; }
#chart text { font-family: "Liberation Sans", Arial, sans-serif; font-size: 14px; fill: #fff; white-space: pre; }
#chart .num { text-anchor: end; }
#chart .strong { font-weight: 700; }
#chart .ongreen { fill: #043004; }
#chart .swing { fill: #159a1c; }
#chart .by { font-family: "Open Sans", sans-serif; font-size: 11px; fill: #2fe0e0; text-anchor: end; }
.sheets { display: flex; align-items: stretch; height: 21px; flex: none; background: #f0f0f0; }
.sheetnav { display: flex; margin-right: 3px; }
.sheetnav button { width: 20px; border-right: 1px solid #999; font-size: 11px; }
.sheetnav svg { width: 12px; height: 12px; }
.sheetnav .dim { color: #888; }
.sheet { position: relative; height: 20px; padding: 0 12px; margin-right: -4px; color: #777; border-bottom: 1px solid #999; white-space: nowrap; }
.sheet::before, .sheet::after { content: ""; position: absolute; top: 0; bottom: 0; width: 1px; background: #999; }
.sheet::before { left: 4px; transform: skewX(24deg); }
.sheet::after { right: 4px; transform: skewX(-24deg); }
.sheet.wide { padding: 0 14px; }
.sheet.on { padding: 0 13px; background: #000; color: #fff; font-weight: 700; clip-path: polygon(0 0, 100% 0, calc(100% - 9px) 100%, 9px 100%); z-index: 1; }
.locks { margin-left: 4px; border-left: 1px solid #999; }
.sheets .hscroll { flex: 1; padding: 0 3px 0 0; }
.sheets .hscroll .thumb { width: 277px; height: 21px; margin-left: auto; }
.sheets .hscroll svg:last-child { margin-left: 2px; }

/* drawing tools */
.dock { width: 26px; margin-left: 6px; flex: none; padding-top: 19px; background: #9ba9c2; color: #111; }
.vtoolbar { background: #bcc7d8; border-radius: 2px 0 0 2px; padding-left: 2px; margin-bottom: 3px; }
.vtoolbar.retrace { margin-bottom: 7px; }
.vtoolbar button { width: 22px; height: 22px; }
.vtoolbar button.on { background: #fff3ca; border: 1px solid #e5c365; }
.vtoolbar svg { width: 16px; height: 16px; fill: none; stroke: #111; }
.vtoolbar .abc { font: 700 11px "Open Sans", sans-serif; }
.intervals button { font: italic 700 14px "Liberation Serif", serif; }
.hgrip { display: block; height: 10px; width: 18px; margin-left: 3px; background: repeating-linear-gradient(90deg, #61708c 0 2px, transparent 2px 4px) no-repeat 0 4px / 15px 2px; }
.vtoolbar .sidemore { width: 24px; height: 12px; margin-left: 0; background: #d2dae7; justify-content: flex-end; padding-right: 3px; }
.vtoolbar .sidemore svg { width: 8px; height: 8px; stroke: none; }

/* status bar */
.statusbar { display: flex; align-items: center; height: 24px; flex: none; color: #e4e9f2; background: #293955; padding-top: 1px; }
.statusbar span { padding: 0 5px; border-right: 1px solid #cdd5e3; line-height: 21px; }
.statusbar .help { flex: 1; border: 0; padding-left: 3px; }
.statusbar .ok { width: 60px; background: #0f0; color: #06400a; text-align: center; margin-left: 2px; }
.statusbar .pct { width: 63px; text-align: center; }
.statusbar .caps { border: 0; color: #56637d; }

/* taskbar */
.taskbar { display: flex; height: 50px; flex: none; color: #fff; background: linear-gradient(90deg, #22383c, #20323e 65%, #1a2742 85%, #1b2942); }
.start { width: 60px; }
.start svg { width: 20px; height: 20px; }
.tasksearch { display: flex; align-items: center; width: 430px; background: #f2f2f2; padding: 0 0 2px 15px; gap: 13px; border-top: 1px solid #ccc; }
.tasksearch svg { width: 20px; height: 20px; fill: none; stroke: #111; stroke-width: 1.5; }
.tasksearch input { flex: 1; min-width: 0; border: 0; background: none; font: inherit; font-size: 18px; }
.tasksearch input::placeholder { color: #333; opacity: 1; }
.taskview { width: 60px; margin-right: 3px; }
.taskview svg { width: 22px; height: 22px; }
.app { width: 62px; border: solid transparent; border-width: 0 5px; background: linear-gradient(#76b9ed, #76b9ed) no-repeat bottom / 100% 3px; padding-bottom: 2px; }
.app svg { width: 30px; height: 30px; overflow: visible; }
.app.active { border-width: 0 1px; background-color: #4b5c66; background-clip: padding-box; }
.taskbar .badge { font-size: 14px; font-weight: 700; fill: #fff; text-anchor: middle; }
.minibadge { font-size: 10px; font-weight: 700; fill: #fff; text-anchor: middle; }
.count { font-size: 13px; font-weight: 700; fill: #fff; text-anchor: middle; }
.tray { margin-left: auto; display: flex; align-items: center; gap: 10px; padding-right: 18px; }
.tray > svg { width: 20px; height: 20px; }
.tray .chev { width: 16px; height: 16px; }
.lang { padding-left: 3px; }
.clock { width: 88px; text-align: center; line-height: 23px; margin-left: -2px; }
.notify { margin-left: 12px; }
.notify svg { width: 32px; height: 32px; margin-top: 6px; }
```

FILE: chart.js
```
const chart = document.getElementById("chart");
const NS = "http://www.w3.org/2000/svg";

const BAR = 4.435;      // distance between two bars
const FIRST = 4;        // x of the first bar
const AXIS = 1629;      // x of the price axis
const WIDTH = 1698;

// One line per session: open,high,low,close for each hour and, last, the
// auction level. Levels count down from 121,980 in steps of a third of a pixel.
const sessions = `
898,898,1022,992 992,968,1030,1005 998,920,1000,933 928,907,968,915 912,912,945,933 935,915,950,922 922,907,937,926 926,832,932,915 892
1008,937,1098,977 970,867,990,905 905,820,945,862 862,850,918,875 878,832,893,845 845,832,882,847 847,843,910,873 873,855,950,885 922
952,952,1010,997 998,965,1018,995 996,960,1005,1003 1003,990,1033,992 988,973,1060,1060 1060,1045,1093,1093 1093,1042,1120,1063 1058,987,1085,1015 1003
970,838,978,850 848,842,912,848 848,798,850,802 808,780,842,805 808,795,837,806 806,760,808,760 758,745,780,763 763,697,778,757 742
598,350,600,408 407,333,420,408 405,390,433,412 415,407,447,425 428,390,437,430 430,400,447,437 437,427,508,466 466,390,467,404 409
409,323,437,335 335,293,377,295 297,262,315,295 295,293,330,297 297,290,322,312 312,302,335,310 310,300,350,328 330,220,332,230 274
216,192,400,298 290,204,292,234 230,110,232,138 130,122,185,182 180,108,225,108 108,95,237,224 224,198,320,275 278,228,320,258 259
286,286,380,320 320,318,378,337 335,308,375,350 350,310,372,360 358,275,360,292 292,280,332,297 297,283,350,293 290,237,322,280 298
410,282,417,378 383,338,408,352 358,358,423,420 422,388,428,421 424,415,445,427 425,350,427,410 418,405,530,435 438,438,472,462 466
425,303,523,430 435,405,460,412 415,318,423,398 392,385,422,388 388,362,390,378 379,357,392,378 378,348,418,415 412,318,422,348 349
286,286,388,345 340,286,404,402 400,327,423,358 362,335,375,350 350,290,380,340 338,308,383,368 368,330,422,422 420,405,470,408 415
520,405,530,455 455,435,487,482 487,388,488,421 420,353,430,398 400,345,430,390 390,388,465,462 468,388,512,445 448,372,480,415 433
300,300,440,320 322,320,466,463 458,378,470,380 376,310,433,360 356,306,357,343 333,286,347,345 333,213,335,275 274,168,322,220 211
274,132,290,244 247,247,332,328 335,277,365,277 277,237,320,300 302,273,312,288 285,285,390,388 388,315,395,368 368,333,400,395 388
216,140,326,303 307,288,443,380 383,366,450,421 419,398,465,417 418,360,442,370 365,362,442,442 440,321,442,388 392,333,430,420 400
283,213,342,256 256,120,258,148 148,80,168,145 138,108,170,150 148,120,167,132 132,118,245,192 190,158,263,178 176,117,266,192 169
300,237,332,247 247,247,565,380 378,312,413,335 340,296,380,305 303,296,372,340 342,318,374,345 346,278,508,390 390,273,392,308 316
336,305,440,375 374,231,375,290 292,233,332,244 244,190,246,203 203,168,237,172 174,163,228,168 170,168,258,213 215,192,326,316 295
316,147,318,228 232,204,318,288 290,276,400,345 345,308,413,317 318,300,375,328 328,295,363,342 343,280,395,302 304,168,310,263 271
152,152,302,235 233,195,235,210 210,210,253,240 235,195,250,215 218,213,247,246 247,196,250,210 212,188,232,222 222,207,263,221 223
160,160,286,248 246,208,268,235 235,157,237,200 198,172,215,172 172,172,257,238 241,208,257,238 238,172,263,175 172,168,228,197 193
280,180,327,230 235,235,292,277 277,158,326,226 228,175,290,237 237,234,405,346 350,300,397,385 386,386,456,392 392,352,470,430 451
405,321,528,382 382,250,425,310 322,263,352,270 270,235,325,250 253,250,342,312 310,246,335,255 255,218,285,243 243,177,298,272 271
440,267,442,293 292,204,300,230 230,220,293,285 286,245,288,258 257,213,265,262 262,243,300,270 268,240,272,252 250,243,278,247 247
286,286,408,400 400,360,458,392 392,338,435,340 355,337,433,403 406,297,412,373 375,362,412,390 385,353,422,395 397,378,455,440 421
408,315,522,420 420,362,422,382 368,340,412,385 386,350,402,358 360,303,362,326 326,303,358,353 350,285,365,298 290,280,403,356 334
421,248,600,252 255,177,285,212 205,160,238,235 240,210,258,248 248,248,328,285 287,250,298,250 250,210,280,277 265,203,278,243 235
246,235,315,283 283,178,285,187 187,167,237,203 200,195,222,218 220,203,230,213 213,165,215,187 187,165,230,215 215,170,230,170 169
170,123,263,160 158,153,230,213 212,195,260,250 248,232,292,262 264,210,297,214 228,225,277,248 246,186,260,210 210,195,240,205 223
242,-3,243,28 28,-20,35,-10 -10,-55,3,-25 -25,-90,-15,-85 -85,-165,-55,-110 -110,-160,-108,-140 -135,-152,-85,-118 -120,-195,-115,-160 -158
-142,-246,-60,-85 -80,-143,-65,-143 -143,-143,-75,-85 -82,-88,-35,-35 -35,-60,-30,-55 -52,-60,8,-23 -22,-60,10,7 40,-42,42,25 28
28,6,100,75 70,12,72,42 42,-5,75,3 3,-22,42,20 14,-22,30,13 13,-45,30,-30 -35,-68,-10,-38 -22,-70,0,-47 -44
-8,-80,35,-55 -57,-57,7,-32 -30,-45,10,-18 -18,-20,8,-8 -13,-25,0,-20 -28,-30,-12,-27 -27,-28,-2,-17 -20,-25,35,-12 10
115,-90,117,-50 -50,-85,-37,-77 -74,-108,-68,-75 -78,-120,-75,-107 -107,-122,-90,-108 -105,-122,-104,-122
`.trim().split("\n");

// Swings: g = up, r = down. 30,000 pips is 168.
const pips = `
g 27 15 23 24 24 23 24 37
r 9 9 42
g 36 43
r 15 11 10 13 20 16 16 29 31 28 33 38 43 47
g 21 18 18 44 44 50 54 50 56 59 66 60 60 121 123 114 112 114 114 109 115 112 112 125 130 135 130 130 129 129 142 134 134 146 144 160 157 160 161
r 35 35 24 24 44 44 43 43 41 38 40 36 32 32 50 48 51 51 55 51 67
g 13 10 10 35
r 24 18 18 13 13 18 18 6 6 12 14 18 11 11 12 18 27 17 17 34
g 13 22 27 28 22 22 24 15 15 36 32 23 34 34 38 49 56 49 49 62
r 31 37 29 28 40 40 42
g 1 1 40
r 47 48 50
g 16 16 22 20 10 10 39 54 60
r 13 13 24 28 29 13 13 39 76
g 40 42 42 38 44 45 38 38 39 51 51 59 61 62 61 58 42 42 65
r 26 39 42
g 17 17 21 38 22 22 40
r 12 16 15 16 15 12 17 11 11 21 20 13 10 16 16 17 11 6 6 27 22 27 21 39 38 48 50 47 47 59
g 43 40 45 44 44 48 54
r 13 13 40
g 37
r 13 12 9 15 10 11 6 6 31 39 36 36 32 32 34 39 34 34 49
g 24 28 27 34 34 37 38
r 9 9 50
g 66 69 61 55 55 61 62 56 56 61 65 67 64 61 69 69 67 67 67 75 70 62 58 60 59 65 64 59 59 94 97 103 108 120 120 119 125 119 119 132
r 28 27 33 33 39 39 44 43 43 54 49 49 44 43 43 37 38 31 31 43 39 40 39 38 37 38 43 39 39 56
g 32 34 37 37 37
`.trim().split("\n");

// Volume swings as bar:height knots, straight lines between them
const volume = `
g 0:18 3:24 7:42
r 8:7 9:7 10:9
g 11:4 12:7
r 13:2 15:5 18:13 22:17 26:25
g 27:2 28:8 30:12 34:24 38:34 42:48 48:63 55:82 58:98 65:117
r 66:7 67:13 68:18 73:23 80:48 86:70
g 87:7 88:16 90:18
r 91:2 100:13 104:20 110:38
g 111:4 114:18 120:32 125:46 130:60
r 131:4 134:12 137:20
g 138:24 139:24 140:26
r 141:7 142:8 143:11
g 144:3 149:13 152:31
r 153:3 158:16 161:41
g 162:7 165:25 170:44 174:67 180:88
r 181:4 182:10 183:13
g 184:3 187:14 190:33
r 191:2 200:17 207:37 214:57 220:79
g 221:3 224:14 227:24
r 228:5 229:5 230:7
g 231:1
r 232:2 236:7 240:19 246:34 250:52
g 251:4 254:14 257:24
r 258:4 259:4 260:11
g 261:4 262:12 263:33 270:48 278:68 279:86 288:97 294:115 300:131
r 301:3 304:13 310:24 318:35 324:38 330:43
g 331:2 332:3 333:5 334:7 335:8
`.trim().split("\n");

function add(name, attrs, text) {
    const el = document.createElementNS(NS, name);
    for (const key in attrs) el.setAttribute(key, attrs[key]);
    if (text !== undefined) el.textContent = text;
    chart.appendChild(el);
    return el;
}

function rect(x, y, width, height, fill) {
    return add("rect", { x, y, width, height, fill });
}

function path(d, stroke, extra) {
    return add("path", Object.assign({ d, stroke, fill: "none" }, extra));
}

const xOf = i => Math.round(FIRST + i * BAR);

// week bands, then grid
const weeks = [[177, "18"], [399, "25"], [621, "Jun"], [843, "8"], [1064, "15"], [1242, "22"], [1463, "29"]];
const panes = [[0, 492], [513, 171], [686, 171]];

for (const [top, height] of panes) {
    let x = 0;
    [...weeks.map(week => week[0]), AXIS].forEach((end, n) => {
        rect(x, top, end - x, height, n % 2 ? "#1c1c1c" : "#121212");
        x = end;
    });
    for (const [wx, label] of weeks) {
        path(`M${wx}.5 ${top}v${height}`, label === "Jun" ? "#4c4c4c" : "#555", label === "Jun" ? {} : { "stroke-dasharray": "1 1" });
    }
}

const priceGrid = [[15, "130,000"], [74, "125,000"], [133, "120,000"], [192, "115,000"], [250, "110,000"], [309, "105,000"], [368, "100,000"], [427, "95,000"], [486, "90,000"]];
const volumeGrid = [[530, "1.5M"], [575, "1M"], [621, "500,000"], [666, "0"]];
const pipGrid = [[704, "30,000"], [727, "25,000"], [749, "20,000"], [772, "15,000"], [795, "10,000"], [818, "5,000"], [840, "0"]];

for (const [y, label] of [...priceGrid, ...volumeGrid, ...pipGrid]) {
    path(`M3 ${y}.5H${AXIS}`, "#4a4a4a", { "stroke-dasharray": "1 1" });
    path(`M${AXIS} ${y}.5h4`, "#aaa");
    add("text", { x: 1693, y: y + 5, class: "num" }, label);
}

// frame lines
path(`M0 492.5H${AXIS}M0 511.5H${WIDTH}M0 684.5H${WIDTH}`, "#a0a0a0");
path(`M${AXIS - 1}.5 0V857`, "#8c8c8c");
for (const [x, label] of weeks) {
    path(`M${x}.5 493v5`, "#a0a0a0");
    add("text", { x: x + 3, y: 506, class: label === "Jun" ? "strong" : "date" }, label);
}

// price bars
const yOf = level => Math.round(110 + level / 3);
let up = "", down = "";
sessions.forEach((line, day) => {
    line.split(" ").forEach((item, n) => {
        const x = xOf(day * 10 + n);
        const v = item.split(",").map(Number);
        if (v.length === 1) {
            down += `M${x - 2} ${yOf(v[0])}.5h9`;
            return;
        }
        const [o, h, l, c] = v.map(yOf);
        const d = `M${x - 2} ${o}.5h2M${x}.5 ${h}V${l + 1}M${x + 1} ${c}.5h2`;
        if (v[3] < v[0]) up += d; else down += d;
    });
});
path(down, "#e01414");
path(up, "#2ee62e");

// swing histograms
const fills = { g: "#0e8f10", r: "#e01210" };
function swingBars(values, base) {
    for (const [i, color, height] of values) rect(xOf(i), base - height, 2, height, fills[color]);
}

const pipBars = [];
for (const line of pips) {
    const [color, ...heights] = line.split(" ");
    for (const h of heights) pipBars.push([pipBars.length, color, Math.round(h * 137 / 168)]);
}
swingBars(pipBars, 840);

const volumeBars = [];
for (const line of volume) {
    const [color, ...items] = line.split(" ");
    const knots = items.map(item => item.split(":").map(Number));
    let k = 0;
    for (let i = knots[0][0]; i <= knots[knots.length - 1][0]; i++) {
        while (k < knots.length - 2 && i > knots[k + 1][0]) k++;
        const [x0, h0] = knots[k];
        const [x1, h1] = knots[k + 1] || knots[k];
        volumeBars.push([i, color, Math.round(x1 === x0 ? h0 : h0 + (h1 - h0) * (i - x0) / (x1 - x0))]);
    }
}
swingBars(volumeBars, 666);

// titles on black
function title(y, parts) {
    const text = add("text", { x: 5, y });
    for (const [str, cls] of parts) {
        const span = document.createElementNS(NS, "tspan");
        span.textContent = str;
        if (cls) span.setAttribute("class", cls);
        text.appendChild(span);
    }
    const box = rect(0, y - 13, text.getComputedTextLength() + 9, 17, "#000");
    chart.insertBefore(box, text);
}
title(14, [["AMS-JSE - Hourly 2020/06/29 14:59:59 Open 124885, Hi 125429, Lo 124885, Close 125429 (0.3%)"]]);
title(527, [["AMS-JSE - "], ["VolumeSwing", "swing"], [" = 81,786.00"]]);
title(700, [["AMS-JSE - "], ["Pip Swing", "swing"], [" = 6,729.00"]]);

// value tags
function tag(y, width, fill, label, cls) {
    path(`M${AXIS} ${y}l8-8.500h${width - 8}v17h${8 - width}z`, "none", { fill });
    add("text", { x: AXIS + width - 5, y: y + 5, class: "num " + cls }, label);
}
tag(69, 69, "#00ff00", "125,429", "ongreen");
tag(658, 62, "#008c00", "81,786", "");
tag(811, 54, "#008c00", "6,729", "");
add("text", { x: 1693, y: 681, class: "by" }, "By : Casoni");
add("text", { x: 1693, y: 855, class: "by" }, "By : Casoni");
```
